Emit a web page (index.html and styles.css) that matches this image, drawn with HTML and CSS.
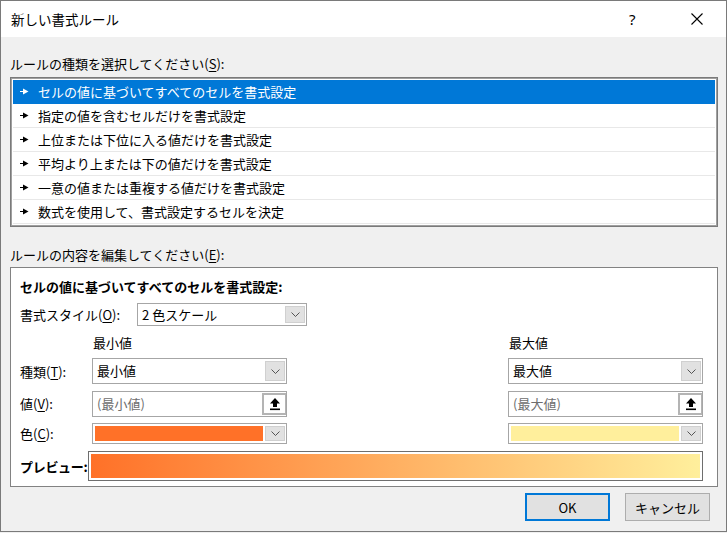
FILE: index.html
```html
<!DOCTYPE html>
<html lang="ja">
<head>
<meta charset="utf-8">
<link rel="stylesheet" href="styles.css">
</head>
<body>
<div class="window">
  <div class="titlebar">
    <span class="title">新しい書式ルール</span>
    <span class="help">?</span>
    <svg class="close" width="12" height="12" viewBox="0 0 12 12"><path d="M0.5 0.5 L11.5 11.5 M11.5 0.5 L0.5 11.5" stroke="#000" stroke-width="1.1" fill="none"/></svg>
  </div>
  <div class="content">
    <div class="label first">ルールの種類を選択してください(<u>S</u>):</div>
    <div class="listbox">
      <div class="row selected"><svg class="arr" width="9" height="7" viewBox="0 0 9 7"><rect x="0" y="3" width="4" height="1" fill="currentColor"/><polygon points="3,0.5 8.5,3.5 3,6.5" fill="currentColor"/></svg>セルの値に基づいてすべてのセルを書式設定</div>
      <div class="row"><svg class="arr" width="9" height="7" viewBox="0 0 9 7"><rect x="0" y="3" width="4" height="1" fill="currentColor"/><polygon points="3,0.5 8.5,3.5 3,6.5" fill="currentColor"/></svg>指定の値を含むセルだけを書式設定</div>
      <div class="row"><svg class="arr" width="9" height="7" viewBox="0 0 9 7"><rect x="0" y="3" width="4" height="1" fill="currentColor"/><polygon points="3,0.5 8.5,3.5 3,6.5" fill="currentColor"/></svg>上位または下位に入る値だけを書式設定</div>
      <div class="row"><svg class="arr" width="9" height="7" viewBox="0 0 9 7"><rect x="0" y="3" width="4" height="1" fill="currentColor"/><polygon points="3,0.5 8.5,3.5 3,6.5" fill="currentColor"/></svg>平均より上または下の値だけを書式設定</div>
      <div class="row"><svg class="arr" width="9" height="7" viewBox="0 0 9 7"><rect x="0" y="3" width="4" height="1" fill="currentColor"/><polygon points="3,0.5 8.5,3.5 3,6.5" fill="currentColor"/></svg>一意の値または重複する値だけを書式設定</div>
      <div class="row"><svg class="arr" width="9" height="7" viewBox="0 0 9 7"><rect x="0" y="3" width="4" height="1" fill="currentColor"/><polygon points="3,0.5 8.5,3.5 3,6.5" fill="currentColor"/></svg>数式を使用して、書式設定するセルを決定</div>
    </div>
    <div class="label second">ルールの内容を編集してください(<u>E</u>):</div>
    <div class="editbox">
      <div class="heading">セルの値に基づいてすべてのセルを書式設定:</div>
      <div class="stylerow">
        <span class="stylelabel">書式スタイル(<u>O</u>):</span>
        <div class="combo stylecombo"><span class="ctext">2 色スケール</span><span class="dbtn"><svg width="9" height="5" viewBox="0 0 9 5"><polyline points="0.5,0.5 4.5,4.5 8.5,0.5" fill="none" stroke="#444" stroke-width="0.9"/></svg></span></div>
      </div>
      <div class="grid">
        <span></span><span class="colhead">最小値</span><span></span><span class="colhead">最大値</span>

        <span class="rlabel">種類(<u>T</u>):</span>
        <div class="combo tall"><span class="ctext">最小値</span><span class="dbtn"><svg width="9" height="5" viewBox="0 0 9 5"><polyline points="0.5,0.5 4.5,4.5 8.5,0.5" fill="none" stroke="#444" stroke-width="0.9"/></svg></span></div>
        <span></span>
        <div class="combo tall"><span class="ctext">最大値</span><span class="dbtn"><svg width="9" height="5" viewBox="0 0 9 5"><polyline points="0.5,0.5 4.5,4.5 8.5,0.5" fill="none" stroke="#444" stroke-width="0.9"/></svg></span></div>

        <span class="rlabel">値(<u>V</u>):</span>
        <div class="input"><span class="ph">(最小値)</span><span class="ubtn"><svg width="12" height="14" viewBox="0 0 12 14"><polygon points="6,1 11,6.5 8,6.5 8,10 4,10 4,6.5 1,6.5" fill="#000"/><rect x="1" y="11.5" width="10" height="1.6" fill="#000"/></svg></span></div>
        <span></span>
        <div class="input"><span class="ph">(最大値)</span><span class="ubtn"><svg width="12" height="14" viewBox="0 0 12 14"><polygon points="6,1 11,6.5 8,6.5 8,10 4,10 4,6.5 1,6.5" fill="#000"/><rect x="1" y="11.5" width="10" height="1.6" fill="#000"/></svg></span></div>

        <span class="rlabel">色(<u>C</u>):</span>
        <div class="combo color"><span class="swatch min"></span><span class="dbtn"><svg width="9" height="5" viewBox="0 0 9 5"><polyline points="0.5,0.5 4.5,4.5 8.5,0.5" fill="none" stroke="#444" stroke-width="0.9"/></svg></span></div>
        <span></span>
        <div class="combo color"><span class="swatch max"></span><span class="dbtn"><svg width="9" height="5" viewBox="0 0 9 5"><polyline points="0.5,0.5 4.5,4.5 8.5,0.5" fill="none" stroke="#444" stroke-width="0.9"/></svg></span></div>
      </div>
      <div class="previewrow">
        <span class="plabel">プレビュー:</span>
        <div class="preview"><div class="grad"></div></div>
      </div>
    </div>
    <div class="buttons">
      <button class="btn ok">OK</button>
      <button class="btn">キャンセル</button>
    </div>
  </div>
</div>
</body>
</html>
```

FILE: styles.css
```css
* { box-sizing: border-box; }
html, body { margin: 0; padding: 0; }
body {
  width: 727px;
  height: 533px;
  background: #f0f0f0;
  font-family: "Noto Sans CJK JP", "Noto Sans", sans-serif;
  font-size: 13px;
  color: #000;
  overflow: hidden;
}
.window {
  width: 727px;
  height: 532px;
  border: 1px solid #7a7a7a;
  background: #f0f0f0;
  display: flex;
  flex-direction: column;
}
u { text-decoration: underline; text-underline-offset: 2px; }
.titlebar {
  height: 36px;
  background: #fff;
  display: flex;
  align-items: center;
  padding-left: 10px;
}
.title { font-size: 13.5px; line-height: 20px; flex: 1; }
.help { font-size: 15px; width: 14px; margin-right: 48px; font-family: "Noto Sans", sans-serif; }
.close { margin-right: 23px; }
.content {
  padding: 0 8px 0 9px;
  display: flex;
  flex-direction: column;
}
.label { line-height: 20px; height: 20px; }
.label.first { margin-top: 17px; }
.label.second { margin-top: 18px; }
.listbox {
  margin-top: 3px;
  height: 150px;
  border: 1px solid #7a7a7a;
  box-shadow: inset 0 0 0 1px #a0a0a0;
  background: #fff;
  padding: 2px;
}
.row {
  height: 24px;
  border-bottom: 1px solid #e8e8e8;
  display: flex;
  align-items: center;
  padding-left: 7px;
  line-height: 23px;
  color: #000;
}
.row.selected { background: #0078d7; color: #fff; border-bottom-color: #0078d7; }
.arr { margin-right: 9px; flex: none; }
.editbox {
  margin-top: 2px;
  height: 220px;
  border: 1px solid #828282;
  background: #fff;
  padding: 9px 14px 0 9px;
  display: flex;
  flex-direction: column;
}
.heading { font-weight: bold; line-height: 20px; height: 20px; }
.stylerow { display: flex; align-items: center; margin-top: 6px; height: 23px; }
.stylelabel { width: 117px; }
.combo {
  background: #fff;
  border: 1px solid #a6a6a6;
  display: flex;
  align-items: center;
}
.stylecombo { width: 170px; height: 23px; }
.ctext { padding-left: 4px; flex: 1; line-height: 20px; }
.dbtn {
  width: 20px;
  align-self: stretch;
  margin: 2px 1px 2px 0;
  background: #e1e1e1;
  border: 1px solid #d0d0d0;
  display: flex;
  align-items: center;
  justify-content: center;
}
.grid {
  display: grid;
  grid-template-columns: 72px 195px 221px 195px;
  grid-template-rows: 20px 26px 26px 21px;
  row-gap: 6px;
  margin-top: 7px;
  align-items: center;
}
.grid .colhead { padding-left: 1px; line-height: 20px; align-self: start; }
.tall { height: 26px; margin-top: -2px; }
.rlabel { line-height: 20px; }
.input {
  height: 26px;
  border: 1px solid #a6a6a6;
  background: #fff;
  display: flex;
  align-items: center;
}
.ph { flex: 1; color: #6d6d6d; padding-left: 4px; line-height: 20px; }
.ubtn {
  width: 24px;
  align-self: stretch;
  margin: 1px 0;
  border: 2px solid #b4b4b4;
  border-right-width: 1px;
  background: #fff;
  display: flex;
  align-items: center;
  justify-content: center;
}
.color { height: 21px; }
.swatch { flex: 1; align-self: stretch; margin: 2px; }
.swatch.min { background: #ff7128; }
.swatch.max { background: #ffef9c; }
.previewrow { display: flex; align-items: center; margin-top: 7px; height: 30px; }
.plabel { width: 68px; flex: none; font-weight: bold; white-space: nowrap; letter-spacing: -0.3px; }
.preview {
  width: 615px;
  height: 30px;
  border: 1px solid #6e6e6e;
  background: #fff;
  padding: 2px;
}
.grad { width: 100%; height: 100%; background: linear-gradient(to right, #ff7128, #ffef9c); }
.buttons {
  display: flex;
  justify-content: flex-end;
  gap: 15px;
  margin-top: 6px;
  padding-right: 8px;
}
.btn {
  width: 85px;
  height: 28px;
  background: #e1e1e1;
  border: 1px solid #adadad;
  font-family: "Noto Sans CJK JP", "Noto Sans", sans-serif;
  font-size: 13px;
  color: #000;
  padding: 0;
}
.btn.ok { border: 2px solid #0078d7; }
```
